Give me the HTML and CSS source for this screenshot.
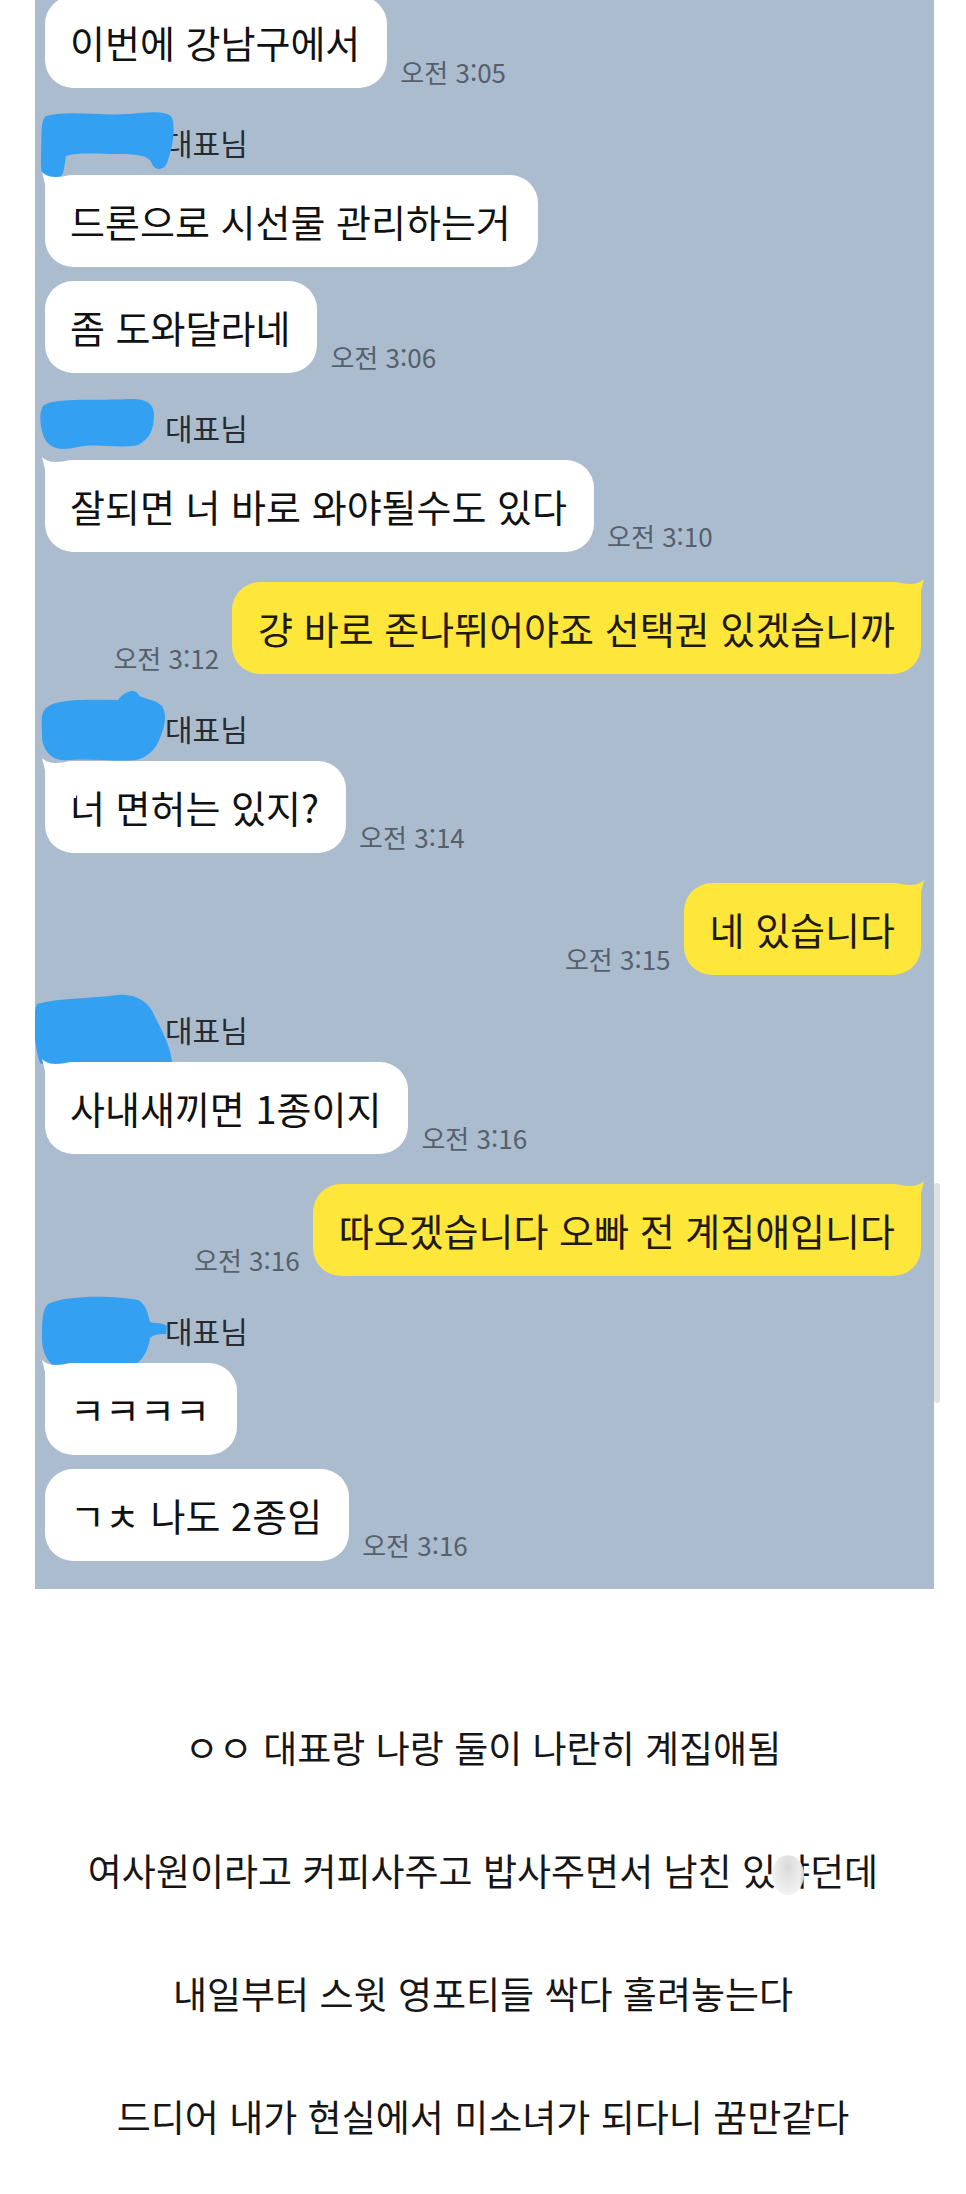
FILE: index.html
```html
<!DOCTYPE html>
<html lang="ko">
<head>
<meta charset="utf-8">
<title>대화</title>
<link rel="stylesheet" href="styles.css">
</head>
<body>
<div class="page">
  <div class="chat">
    <div class="row first-row">
      <div class="bubble">이번에 강남구에서</div>
      <span class="time">오전 3:05</span>
    </div>

    <div class="name">
      <svg class="scrib s1" viewBox="0 0 140 80"><path d="M8 8 C30 2 60 8 90 6 C110 4 130 2 134 10 C138 22 134 40 130 52 C128 62 118 64 114 56 C112 48 100 46 80 46 C60 46 40 44 28 48 C26 60 26 72 16 74 C6 76 2 66 3 50 C4 30 2 12 8 8 Z"/></svg>
      대표님
    </div>
    <div class="row">
      <div class="bubble tail">드론으로 시선물 관리하는거</div>
    </div>
    <div class="row gap">
      <div class="bubble">좀 도와달라네</div>
      <span class="time">오전 3:06</span>
    </div>

    <div class="name">
      <svg class="scrib s2" viewBox="0 0 120 58"><path d="M6 10 C20 2 60 6 90 4 C108 3 116 8 116 20 C116 34 112 44 100 50 C80 54 60 48 40 52 C24 56 14 54 8 46 C2 36 0 16 6 10 Z"/></svg>
      대표님
    </div>
    <div class="row">
      <div class="bubble tail">잘되면 너 바로 와야될수도 있다</div>
      <span class="time">오전 3:10</span>
    </div>

    <div class="row me">
      <span class="time">오전 3:12</span>
      <div class="bubble yellow tail-r">걍 바로 존나뛰어야죠 선택권 있겠습니까</div>
    </div>

    <div class="name">
      <svg class="scrib s3" viewBox="0 0 130 76"><path d="M8 20 C20 10 50 12 80 12 C86 4 96 0 100 6 C104 12 116 10 124 18 C130 28 126 40 122 50 C118 62 108 70 98 72 C80 74 50 70 30 72 C14 74 4 62 4 48 C4 34 2 26 8 20 Z"/></svg>
      대표님
    </div>
    <div class="row">
      <div class="bubble tail">너 면허는 있지?</div>
      <span class="time">오전 3:14</span>
    </div>

    <div class="row me">
      <span class="time">오전 3:15</span>
      <div class="bubble yellow tail-r">네 있습니다</div>
    </div>

    <div class="name">
      <svg class="scrib s4" viewBox="0 0 146 104"><path d="M5 13 C30 6 60 8 85 4 C104 2 118 12 122 24 C130 40 142 60 140 80 C138 96 130 103 118 100 C106 96 98 84 74 80 C48 76 22 80 8 72 C2 54 0 24 5 13 Z"/></svg>
      대표님
    </div>
    <div class="row">
      <div class="bubble tail">사내새끼면 1종이지</div>
      <span class="time">오전 3:16</span>
    </div>

    <div class="row me">
      <span class="time">오전 3:16</span>
      <div class="bubble yellow tail-r">따오겠습니다 오빠 전 계집애입니다</div>
    </div>

    <div class="name">
      <svg class="scrib s5" viewBox="0 0 132 84"><path d="M10 10 C30 0 80 2 100 6 C108 10 110 20 112 28 C118 30 124 28 129 32 L128 40 C122 40 116 40 112 44 C110 58 104 68 92 74 C76 82 50 82 30 78 C12 74 4 62 4 44 C4 28 4 16 10 10 Z"/></svg>
      대표님
    </div>
    <div class="row">
      <div class="bubble tail">ㅋㅋㅋㅋ</div>
    </div>
    <div class="row gap">
      <div class="bubble">ㄱㅊ 나도 2종임</div>
      <span class="time">오전 3:16</span>
    </div>
  </div>
  <div class="scrollbar"></div>

  <div class="caption">
    <p>ㅇㅇ 대표랑 나랑 둘이 나란히 계집애됨</p>
    <p>여사원이라고 커피사주고 밥사주면서 남친 있<span class="smudge">냐</span>던데</p>
    <p>내일부터 스윗 영포티들 싹다 홀려놓는다</p>
    <p>드디어 내가 현실에서 미소녀가 되다니 꿈만같다</p>
  </div>
</div>
</body>
</html>
```

FILE: styles.css
```css
html, body {
  margin: 0;
  padding: 0;
  background: #ffffff;
}

body {
  font-family: "Noto Sans CJK KR", "Noto Sans", sans-serif;
  color: #1c1c1c;
}

.page {
  width: 966px;
  height: 2194px;
  position: relative;
  overflow: hidden;
}

.chat {
  margin-left: 35px;
  width: 899px;
  height: 1589px;
  box-sizing: border-box;
  padding: 0 13px 0 10px;
  background: #abbccf;
  display: flex;
  flex-direction: column;
  overflow: hidden;
}

.row {
  display: flex;
  align-items: flex-end;
  gap: 13px;
}

.row.first-row {
  margin-top: -4px;
}

.row.gap {
  margin-top: 14px;
}

.row.me {
  justify-content: flex-end;
  margin-top: 30px;
}

.bubble {
  position: relative;
  height: 92px;
  box-sizing: border-box;
  padding: 0 27px 0 25px;
  display: flex;
  align-items: center;
  font-size: 38px;
  font-weight: 400;
  line-height: 1;
  white-space: nowrap;
  background: #ffffff;
  border-radius: 28px;
  color: #111111;
}

.bubble.yellow {
  background: #fee63b;
  color: #1f1a0c;
  padding: 0 26px 0 26px;
}

.bubble.tail::before,
.bubble.tail-r::before {
  content: "";
  position: absolute;
  top: -3px;
  width: 34px;
  height: 40px;
  background: inherit;
}

.bubble.tail::before {
  left: -3px;
  clip-path: path("M0 0 C8 8 18 4 34 3 L34 40 L3 40 L3 12 Z");
}

.bubble.tail-r::before {
  right: -3px;
  clip-path: path("M34 0 C26 8 16 4 0 3 L0 40 L31 40 L31 12 Z");
}

.time {
  font-size: 26px;
  line-height: 32px;
  color: #56606c;
  white-space: nowrap;
}

.name {
  position: relative;
  margin-top: 36px;
  margin-bottom: 15px;
  padding-left: 120px;
  height: 36px;
  line-height: 36px;
  font-size: 30px;
  color: #262b31;
}

.scrib {
  position: absolute;
  fill: #34a0f2;
}

.scrib.s1 { left: -7px; top: -16px; width: 140px; height: 80px; }
.scrib.s2 { left: -7px; top: -14px; width: 120px; height: 58px; }
.scrib.s3 { left: -7px; top: -22px; width: 130px; height: 76px; }
.scrib.s4 { left: -13px; top: -20px; width: 146px; height: 104px; }
.scrib.s5 { left: -7px; top: -18px; width: 132px; height: 84px; }

.scrollbar {
  position: absolute;
  left: 934px;
  top: 1183px;
  width: 6px;
  height: 220px;
  background: #dfe2e5;
  border-radius: 3px;
}

.caption {
  display: flex;
  flex-direction: column;
  align-items: center;
  gap: 83px;
  padding-top: 138px;
}

.caption p {
  margin: 0;
  font-size: 37px;
  line-height: 40px;
  color: #161616;
  white-space: nowrap;
}

.smudge {
  position: relative;
}

.smudge::after {
  content: "";
  position: absolute;
  left: -4px;
  top: 12px;
  width: 32px;
  height: 40px;
  border-radius: 50%;
  background: radial-gradient(ellipse at 50% 30%, #d9d9d9 0%, #e9e9e9 45%, rgba(240,240,240,0.9) 70%, rgba(255,255,255,0) 100%);
}
```
